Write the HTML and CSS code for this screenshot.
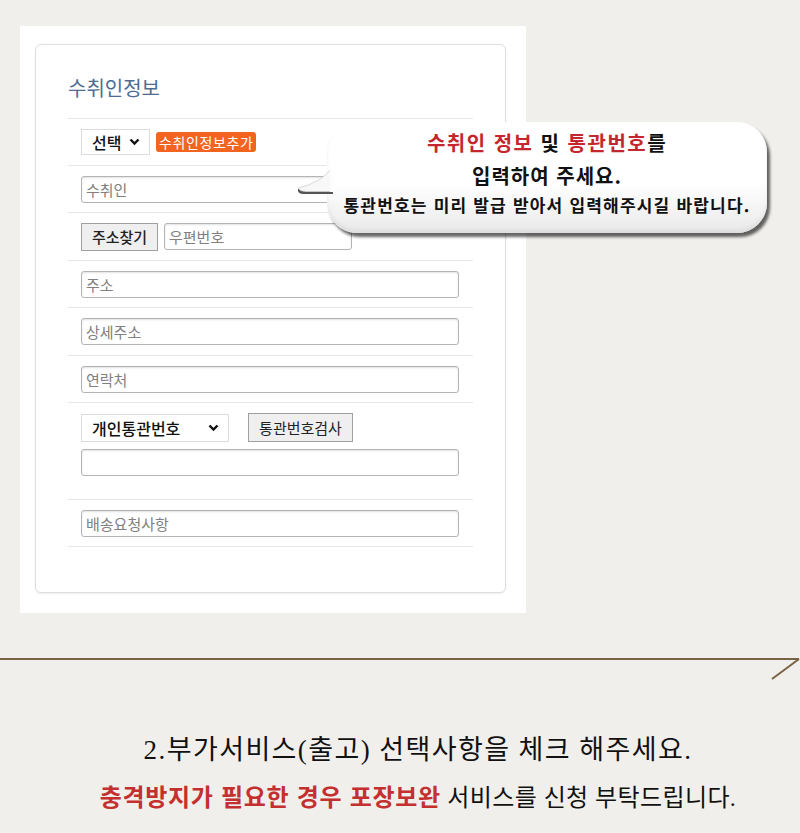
FILE: index.html
```html
<!DOCTYPE html>
<html lang="ko">
<head>
  <meta charset="UTF-8">
  <title>수취인정보 입력 안내</title>
  <link rel="stylesheet" href="styles.css">
</head>
<body>
  <div class="page">
    <div class="panel">
      <div class="card">
        <h2 class="card-title">수취인정보</h2>

        <div class="row">
          <div class="select select-small">
            <span>선택</span>
            <svg class="chevron" width="11" height="8" viewBox="0 0 11 8"><path d="M1.5 1.5 L5.5 5.5 L9.5 1.5" fill="none" stroke="#111" stroke-width="2.4"/></svg>
          </div>
          <button type="button" class="btn-orange">수취인정보추가</button>
        </div>

        <div class="row">
          <input type="text" class="field" placeholder="수취인">
        </div>

        <div class="row row-48">
          <button type="button" class="btn-grey btn-address">주소찾기</button>
          <input type="text" class="field field-zip" placeholder="우편번호">
        </div>

        <div class="row">
          <input type="text" class="field" placeholder="주소">
        </div>

        <div class="row row-48">
          <input type="text" class="field" placeholder="상세주소">
        </div>

        <div class="row">
          <input type="text" class="field" placeholder="연락처">
        </div>

        <div class="row row-customs">
          <div class="customs-top">
            <div class="select select-wide">
              <span>개인통관번호</span>
              <svg class="chevron" width="11" height="8" viewBox="0 0 11 8"><path d="M1.5 1.5 L5.5 5.5 L9.5 1.5" fill="none" stroke="#111" stroke-width="2.4"/></svg>
            </div>
            <button type="button" class="btn-grey btn-check">통관번호검사</button>
          </div>
          <input type="text" class="field">
        </div>

        <div class="row row-48 row-last">
          <input type="text" class="field" placeholder="배송요청사항">
        </div>
      </div>
    </div>

    <svg class="divider" width="800" height="24" viewBox="0 0 800 24">
      <line x1="0" y1="1" x2="799" y2="1" stroke="#7a6244" stroke-width="2"/>
      <line x1="799" y1="1" x2="772" y2="21" stroke="#7a6244" stroke-width="2"/>
    </svg>

    <div class="notice">
      <p class="notice-main">2.부가서비스(출고) 선택사항을 체크 해주세요.</p>
      <p class="notice-sub"><strong>충격방지가 필요한 경우 포장보완</strong> 서비스를 신청 부탁드립니다.</p>
    </div>
  </div>

  <!-- speech bubble over the form -->
  <div class="bubble">
    <svg class="bubble-tail" width="36" height="32" viewBox="0 0 36 32">
      <path d="M36 6 Q 22 21 1 23 Q 0 28 7 28 L 36 28 Z" fill="#555"/>
      <path d="M36 1 Q 24 17 1 22 Q 3 25.5 9 25.5 L 36 25.5 Z" fill="#f8f8f8" stroke="#cfcfcf" stroke-width="0.8"/>
      <rect x="33" y="0" width="3" height="26" fill="#fdfdfd"/>
    </svg>
    <p class="bubble-line1"><span class="red">수취인 정보</span> 및 <span class="red">통관번호</span>를</p>
    <p class="bubble-line2">입력하여 주세요.</p>
    <p class="bubble-line3">통관번호는 미리 발급 받아서 입력해주시길 바랍니다.</p>
  </div>
</body>
</html>
```

FILE: styles.css
```css
body {
  margin: 0;
  background-color: #f0efeb;
  font-family: "Noto Sans CJK KR", "Noto Sans", sans-serif;
  color: #222;
}
.page {
  padding-top: 26px;
}
.panel {
  margin-left: 20px;
  width: 506px;
  height: 587px;
  box-sizing: border-box;
  padding: 18px 20px 20px 15px;
  background: #fff;
}
.card {
  height: 549px;
  box-sizing: border-box;
  border: 1px solid #dedede;
  border-radius: 6px;
  box-shadow: 0 1px 2px rgba(0,0,0,0.08);
  padding: 0 32px;
}
.card-title {
  margin: 29px 0 17px;
  font-size: 20px;
  line-height: 27px;
  font-weight: 400;
  color: #4e6c92;
}
.row {
  height: 47px;
  box-sizing: border-box;
  border-top: 1px solid #e7e7e7;
  padding-left: 13px;
  display: flex;
  align-items: center;
  gap: 6px;
}
.row-48 {
  height: 48px;
}
.row-last {
  border-bottom: 1px solid #e7e7e7;
}
.row-customs {
  height: 97px;
  flex-direction: column;
  align-items: flex-start;
  justify-content: flex-start;
  gap: 7px;
  padding-top: 10px;
}
.customs-top {
  display: flex;
  align-items: center;
  gap: 19px;
}
.field {
  width: 378px;
  height: 27px;
  box-sizing: border-box;
  border: 1px solid #b4b4b4;
  border-radius: 3px;
  box-shadow: inset 0 1px 2px rgba(0,0,0,0.12);
  padding: 0 4px;
  font-family: inherit;
  font-size: 15px;
  color: #333;
  background: #fff;
}
.field::placeholder {
  color: #808080;
}
.field-zip {
  width: 188px;
}
.select {
  height: 26px;
  box-sizing: border-box;
  border: 1px solid #dcdcdc;
  background: #fff;
  display: flex;
  align-items: center;
  justify-content: space-between;
  padding: 0 9px 0 10px;
  font-size: 16px;
  font-weight: 500;
  color: #111;
}
.select-small {
  width: 69px;
}
.select-wide {
  width: 148px;
  height: 28px;
}
.chevron {
  display: block;
}
.btn-orange {
  height: 20px;
  padding: 0 3px;
  border: none;
  border-radius: 3px;
  background: #f2641f;
  color: #fff;
  font-family: inherit;
  font-size: 14px;
  line-height: 20px;
  letter-spacing: 0.6px;
}
.btn-grey {
  height: 28px;
  box-sizing: border-box;
  border: 1px solid #a0a0a0;
  background: #efefef;
  font-family: inherit;
  font-size: 15px;
  font-weight: 500;
  color: #222;
  padding: 0;
}
.btn-address {
  width: 77px;
}
.btn-check {
  width: 105px;
  height: 29px;
  font-weight: 400;
}
.divider {
  display: block;
  margin-top: 45px;
}
.notice {
  text-align: center;
  padding-left: 36px;
}
.notice p {
  margin: 0;
}
.notice-main {
  margin-top: 50px !important;
  font-family: "Liberation Serif", "Noto Sans CJK KR", serif;
  font-size: 27px;
  line-height: 36px;
  letter-spacing: 1.4px;
  color: #111;
}
.notice-sub {
  margin-top: 12px !important;
  font-family: "Liberation Serif", "Noto Sans CJK KR", serif;
  font-size: 24px;
  line-height: 32px;
  letter-spacing: 0.4px;
  color: #111;
}
.notice-sub strong {
  font-family: "Noto Sans CJK KR", sans-serif;
  letter-spacing: 0.7px;
  color: #c4302f;
}
.bubble {
  position: absolute;
  left: 327px;
  top: 122px;
  width: 440px;
  height: 111px;
  border-radius: 30px;
  background: linear-gradient(#ffffff 55%, #e9e9e9);
  box-shadow: 3px 4px 3px rgba(0,0,0,0.6), inset 0 -3px 4px rgba(0,0,0,0.06);
  text-align: center;
  font-weight: 700;
  color: #111;
}
.bubble p {
  margin: 0;
}
.bubble-tail {
  position: absolute;
  left: -30px;
  top: 44px;
}
.bubble-line1 {
  padding-top: 7px;
  font-size: 20px;
  line-height: 28px;
  letter-spacing: 1.5px;
}
.bubble-line2 {
  margin-top: 5px !important;
  font-size: 20px;
  line-height: 28px;
  letter-spacing: 1px;
}
.bubble-line3 {
  margin-top: 3px !important;
  font-size: 17px;
  line-height: 24px;
  letter-spacing: 1.2px;
}
.red {
  color: #c4262e;
}
```
